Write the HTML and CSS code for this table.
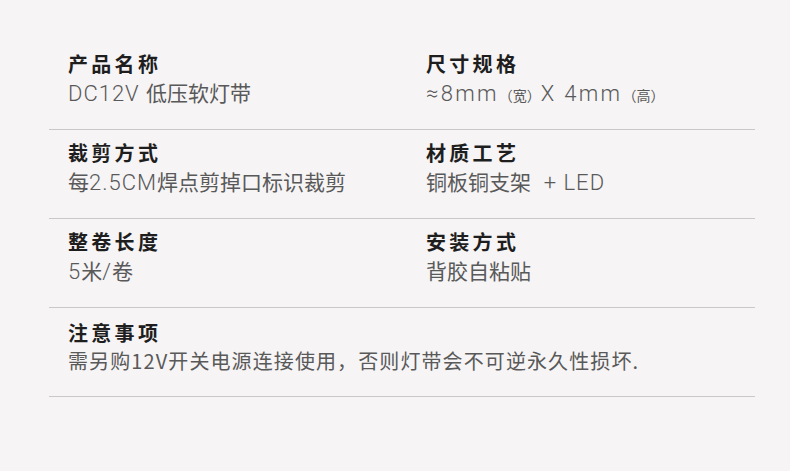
FILE: index.html
```html
<!DOCTYPE html>
<html lang="zh-CN">
<head>
<meta charset="utf-8">
<link rel="stylesheet" href="styles.css">
</head>
<body>
<div class="specs">
  <div class="row">
    <div class="cell">
      <div class="label">产品名称</div>
      <div class="value"><span class="en">DC12V </span>低压软灯带</div>
    </div>
    <div class="cell">
      <div class="label">尺寸规格</div>
      <div class="value"><span class="en wide">≈8mm</span><span class="small">（宽）</span><span class="en wide">X 4mm</span><span class="small">（高）</span></div>
    </div>
  </div>
  <div class="row">
    <div class="cell">
      <div class="label">裁剪方式</div>
      <div class="value">每<span class="en">2.5CM</span>焊点剪掉口标识裁剪</div>
    </div>
    <div class="cell">
      <div class="label">材质工艺</div>
      <div class="value">铜板铜支架<span class="en">&nbsp;&nbsp;+ LED</span></div>
    </div>
  </div>
  <div class="row">
    <div class="cell">
      <div class="label">整卷长度</div>
      <div class="value"><span class="en">5</span>米<span class="en">/</span>卷</div>
    </div>
    <div class="cell">
      <div class="label">安装方式</div>
      <div class="value">背胶自粘贴</div>
    </div>
  </div>
  <div class="row single">
    <div class="cell">
      <div class="label">注意事项</div>
      <div class="value note">需另购12V开关电源连接使用，否则灯带会不可逆永久性损坏.</div>
    </div>
  </div>
</div>
</body>
</html>
```
FILE: styles.css
```css
html, body {
  margin: 0;
  padding: 0;
  background: #f6f4f5;
}
body {
  width: 790px;
  height: 471px;
  overflow: hidden;
  font-family: "Noto Sans CJK SC", "Noto Sans", sans-serif;
}
.specs {
  margin: 41px 35px 0 49px;
}
.row {
  display: grid;
  grid-template-columns: 358px 1fr;
  padding: 9px 0 23px 19px;
  border-bottom: 1px solid #c9c7c8;
}
.label {
  font-size: 20px;
  line-height: 28px;
  font-weight: 700;
  color: #1e1e1e;
  letter-spacing: 3.3px;
}
.value {
  font-size: 21px;
  line-height: 28px;
  height: 28px;
  color: #595959;
  white-space: nowrap;
}
.en {
  font-family: "Roboto", "Noto Sans CJK SC", sans-serif;
  font-weight: 300;
  font-size: 22px;
  letter-spacing: 1px;
  line-height: 1;
}
.en.wide {
  letter-spacing: 2.3px;
}
.small {
  font-size: 14px;
  line-height: 1;
}
.note {
  font-size: 20px;
  letter-spacing: 1.1px;
}
.single {
  display: block;
  padding-top: 11px;
  padding-bottom: 21px;
}
```
